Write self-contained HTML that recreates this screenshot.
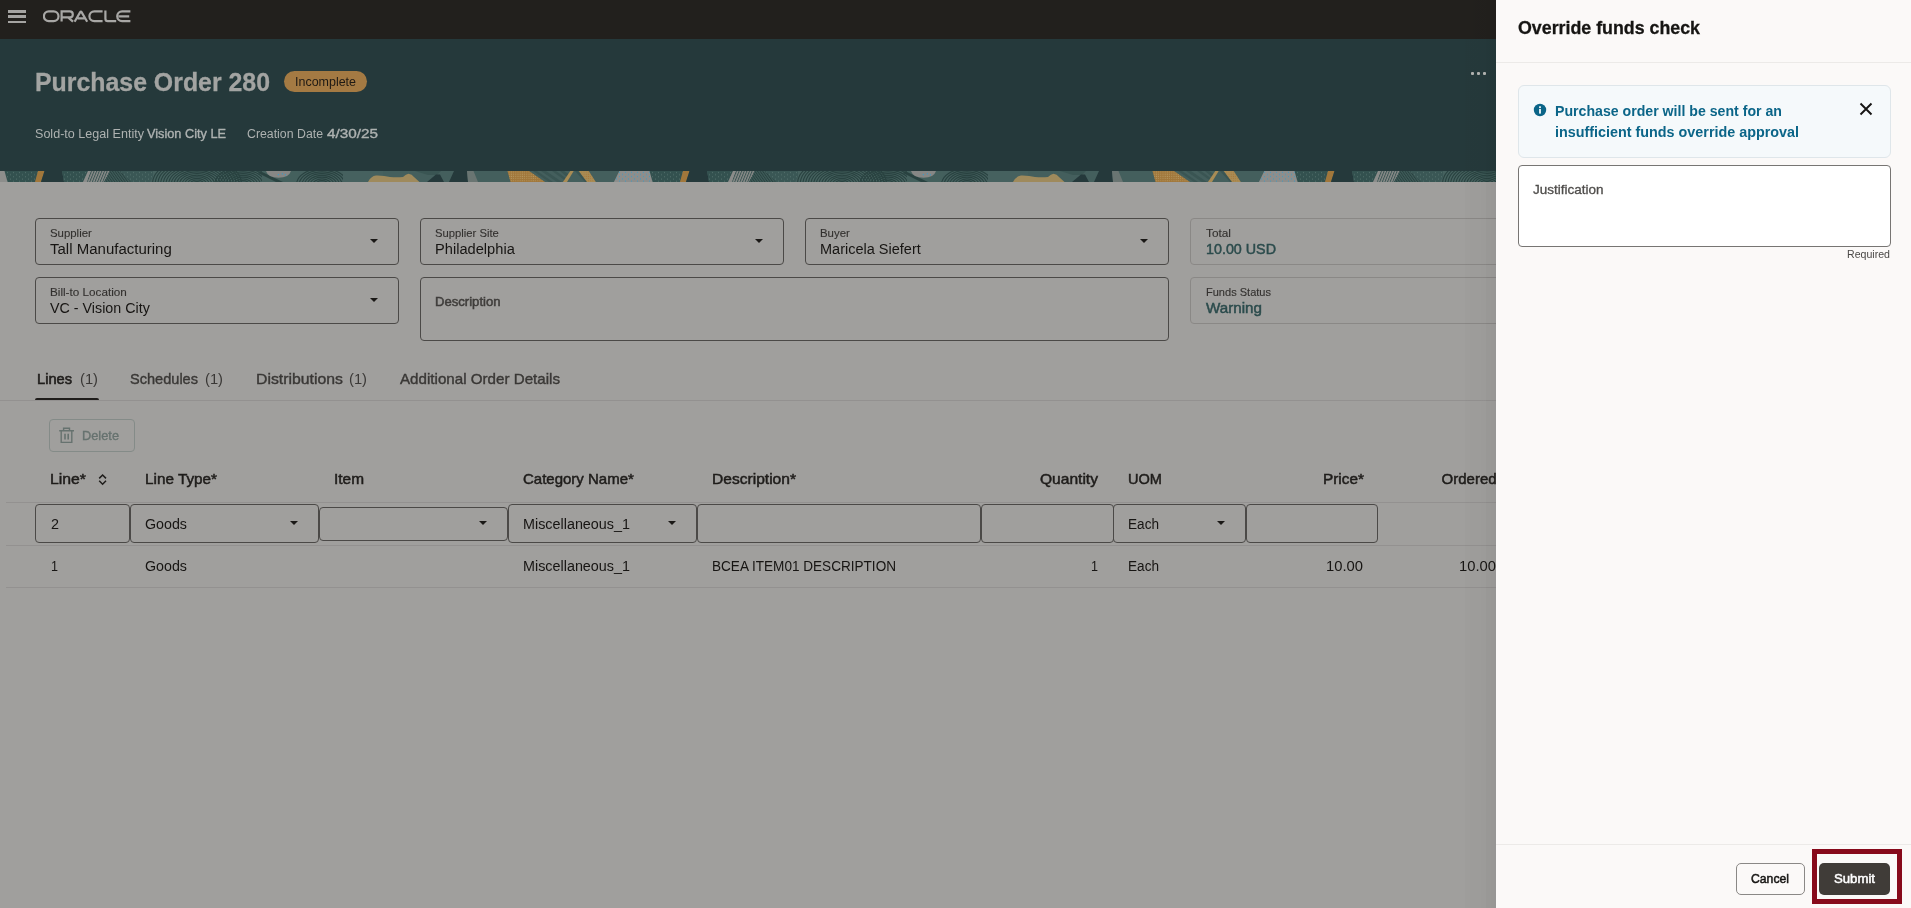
<!DOCTYPE html>
<html>
<head>
<meta charset="utf-8">
<title>Purchase Order 280</title>
<style>
*{box-sizing:border-box;margin:0;padding:0}
html,body{width:1911px;height:908px;overflow:hidden}
body{font-family:"Liberation Sans",sans-serif;background:#a09f9d;color:#1a1816;position:relative}
.abs{position:absolute}
.t{position:absolute;white-space:nowrap;line-height:1;transform-origin:0 50%}
#topbar{left:0;top:0;width:1496px;height:39px;background:#22201d}
#teal{left:0;top:39px;width:1496px;height:132px;background:#25393b}
#strip{left:0;top:171px;width:1496px;height:11px;overflow:hidden;background:#445d5b}
.fld{position:absolute;border:1px solid #4b4947;border-radius:4px;height:47px}
.fld.ro{border-color:#8a8886}
.arr{position:absolute;width:0;height:0;margin-left:1px;margin-top:0.5px;border-left:4.5px solid transparent;border-right:4.5px solid transparent;border-top:4.5px solid #1a1816}
.cell{position:absolute;border:1px solid #4b4947;border-radius:4px;top:504px;height:39px}
.hl{position:absolute;height:1px;background:#939190}
#drawer{left:1496px;top:0;width:415px;height:908px;background:#fbf9f8}
#shadow{left:1465px;top:0;width:31px;height:908px;background:linear-gradient(to right,rgba(0,0,0,0.012) 0,rgba(0,0,0,0.02) 21px,rgba(0,0,0,0.04) 21px,rgba(0,0,0,0.05) 31px)}
</style>
</head>
<body>
<div id="root" style="position:absolute;left:0;top:0;width:1911px;height:908px;will-change:transform">
<div id="topbar" class="abs"></div>
<div id="teal" class="abs"></div>
<div id="strip" class="abs"><!--STRIP_START--><svg width="1496" height="11" viewBox="0 0 1496 11" style="display:block">
<defs>
<pattern id="dt" width="6" height="4.4" patternUnits="userSpaceOnUse"><rect x="1" y="1" width="0.9" height="0.9" fill="#5b7773"/><rect x="4" y="3.2" width="0.9" height="0.9" fill="#5b7773"/></pattern>
<pattern id="db" width="6" height="4.4" patternUnits="userSpaceOnUse"><rect x="1" y="0.8" width="1" height="1" fill="#3f9ac2"/><rect x="4" y="3" width="1" height="1" fill="#3f9ac2"/></pattern>
<pattern id="do" width="2.2" height="2.2" patternUnits="userSpaceOnUse"><rect x="0.5" y="0.5" width="0.9" height="0.9" fill="#b89d66"/></pattern>
<pattern id="do2" width="2.2" height="2.2" patternUnits="userSpaceOnUse"><rect x="0.5" y="0.5" width="1" height="1" fill="#a9783a"/></pattern>
<pattern id="hz" width="2.6" height="11" patternUnits="userSpaceOnUse" patternTransform="skewX(-22)"><rect x="0" y="0" width="1.1" height="11" fill="#3a5553"/></pattern>
<pattern id="hz2" width="2.6" height="11" patternUnits="userSpaceOnUse" patternTransform="skewX(35)"><rect x="0" y="0" width="1.2" height="11" fill="#294240"/></pattern>
<g id="tile">
<rect x="0" y="0" width="646" height="11" fill="#445f5d"/>
<polygon points="4.5,0 38,0 35,11 7.5,11" fill="#33514f"/><polygon points="4.5,0 38,0 35,11 7.5,11" fill="url(#dt)"/>
<polygon points="38,0 44.5,0 41,11 35,11" fill="#a1773b"/>
<polygon points="44.5,0 62,0 64,11 41,11" fill="#25393b"/>
<polygon points="62,0 88,0 83,11 64,11" fill="#33514f"/><polygon points="62,0 88,0 83,11 64,11" fill="url(#dt)"/>
<polygon points="88,0 110,0 104,11 83,11" fill="#8b8c8a"/><polygon points="90,0 110,0 104,11 87,11" fill="url(#hz)"/><polygon points="110,0 122,0 133,11 104,11" fill="#3f5b59"/><polygon points="110,0 122,0 133,11 104,11" fill="url(#hz2)"/>
<polygon points="120,0 156,0 150,11 131,11" fill="#3a5755"/><polygon points="120,0 156,0 150,11 131,11" fill="url(#dt)"/>
<rect x="153" y="0" width="113" height="11" fill="#46625f"/>
<g fill="none" stroke="#294240" stroke-width="1.1"><ellipse cx="197" cy="13" rx="4.0" ry="2.4"/><ellipse cx="197" cy="13" rx="6.7" ry="4.0"/><ellipse cx="197" cy="13" rx="9.4" ry="5.6"/><ellipse cx="197" cy="13" rx="12.1" ry="7.3"/><ellipse cx="197" cy="13" rx="14.8" ry="8.9"/><ellipse cx="197" cy="13" rx="17.5" ry="10.5"/><ellipse cx="197" cy="13" rx="20.2" ry="12.1"/><ellipse cx="197" cy="13" rx="22.9" ry="13.7"/><ellipse cx="197" cy="13" rx="25.6" ry="15.4"/><ellipse cx="197" cy="13" rx="28.3" ry="17.0"/><ellipse cx="197" cy="13" rx="31.0" ry="18.6"/><ellipse cx="197" cy="13" rx="33.7" ry="20.2"/><ellipse cx="197" cy="13" rx="36.4" ry="21.8"/><ellipse cx="197" cy="13" rx="39.1" ry="23.5"/><ellipse cx="197" cy="13" rx="41.8" ry="25.1"/><ellipse cx="197" cy="13" rx="44.5" ry="26.7"/><ellipse cx="243" cy="14" rx="4.0" ry="2.6"/><ellipse cx="243" cy="14" rx="6.7" ry="4.4"/><ellipse cx="243" cy="14" rx="9.4" ry="6.1"/><ellipse cx="243" cy="14" rx="12.1" ry="7.9"/><ellipse cx="243" cy="14" rx="14.8" ry="9.6"/><ellipse cx="243" cy="14" rx="17.5" ry="11.4"/><ellipse cx="243" cy="14" rx="20.2" ry="13.1"/><ellipse cx="243" cy="14" rx="22.9" ry="14.9"/><ellipse cx="243" cy="14" rx="25.6" ry="16.6"/><ellipse cx="243" cy="14" rx="28.3" ry="18.4"/></g>
<rect x="262" y="0" width="36" height="11" fill="#44605d"/>
<path d="M260 0L283 11H276L258 2Z" fill="#294240"/>
<path d="M266 0h25q-2 6.8-12.500 6.800T266 0z" fill="#868785"/>
<rect x="277.800" y="3" width="1.200" height="1.200" fill="#3f9ac2"/><rect x="281.800" y="2.200" width="1.200" height="1.200" fill="#3f9ac2"/><rect x="284.800" y="3.200" width="1.200" height="1.200" fill="#3f9ac2"/>
<g fill="none" stroke="#294240" stroke-width="1.1"><ellipse cx="322" cy="14" rx="4.0" ry="2.6"/><ellipse cx="322" cy="14" rx="6.7" ry="4.4"/><ellipse cx="322" cy="14" rx="9.4" ry="6.1"/><ellipse cx="322" cy="14" rx="12.1" ry="7.9"/><ellipse cx="322" cy="14" rx="14.8" ry="9.6"/><ellipse cx="322" cy="14" rx="17.5" ry="11.4"/><ellipse cx="322" cy="14" rx="20.2" ry="13.1"/><ellipse cx="322" cy="14" rx="22.9" ry="14.9"/><ellipse cx="322" cy="14" rx="25.6" ry="16.6"/></g>
<rect x="343" y="0" width="40" height="11" fill="#46615f"/>
<path d="M368 11Q371 5 376 4.500Q384 4.300 390 6Q397 6.400 403 6Q406 3 408.500 2.700Q412 3 414 6L419.500 11Z" fill="#9f8a5c"/>
<polygon points="415,0 441,0 437,4 428,4" fill="#3a5553"/>
<polygon points="427,11 436,3.500 440,3.500 444,11" fill="#25393b"/>
<polygon points="454,0 467,0 468,11 449,11" fill="#25393b"/>
<polygon points="467,0 473.500,0 478,11 468,11" fill="#6a7572"/>
<polygon points="507.500,0 529,0 545,11 510.500,11" fill="#a1773b"/><polygon points="507.500,0 529,0 545,11 510.500,11" fill="url(#do)"/>
<g fill="#3a5553"><polygon points="533,0 537,0 553,11 549,11"/><polygon points="541,0 546,0 562,11 557,11"/><polygon points="552,0 556,0 567,8 567,11"/><polygon points="560,0 564,0 570,4 568,7"/></g>
<polygon points="562.900,11 567,11 573.700,0 570.300,0" fill="#a98c55"/>
<polygon points="575,0 578,0 588,11 585,11" fill="#3a5553"/>
<polygon points="578.800,0 588.700,0 595.800,11 587,11" fill="#a98c55"/><polygon points="578.800,0 588.700,0 595.800,11 587,11" fill="url(#do2)"/>
<polygon points="619.300,0 649.500,0 652.500,11 613.900,11" fill="#8d8e8c"/><polygon points="619.300,0 649.500,0 652.500,11 613.900,11" fill="url(#db)"/>
</g>
</defs>
<use href="#tile" x="1290"/><use href="#tile" x="645"/><use href="#tile" x="0"/>
<polygon points="0,0 4.500,0 7.500,11 0,11" fill="#8d8e8c"/>
</svg>
<!--STRIP_END--></div>

<!-- hamburger -->
<div class="abs" style="left:8px;top:10px;width:18px;height:2.5px;background:#a5a4a2"></div>
<div class="abs" style="left:8px;top:15.2px;width:18px;height:2.5px;background:#a5a4a2"></div>
<div class="abs" style="left:8px;top:20.5px;width:18px;height:2.5px;background:#a5a4a2"></div>
<!-- oracle logo -->
<svg class="abs" style="left:43px;top:10.2px" width="88" height="13" viewBox="0 0 88 13">
<g fill="none" stroke="#a8a7a5" stroke-width="2.2">
<rect x="0.9" y="1.4" width="14.6" height="9.8" rx="4.9"/>
<path d="M18.6 11.6V1.4h8.2a3 3 0 0 1 0 6h-7.4M25.4 7.6l4.6 4"/>
<path d="M31.6 11.7l5.6-9.6q.7-1.1 1.4 0l5.6 9.6M34.6 8.4h7.6"/>
<path d="M59.6 1.4h-8.3a4.9 4.9 0 0 0 0 9.8h8.3"/>
<path d="M62.4 0.6v8.2q0 2.4 2.4 2.4h8.4"/>
<path d="M87.4 1.4h-8.3a4.9 4.9 0 0 0 0 9.8h8.3M75.6 6.3h10.6"/>
</g>
</svg>

<!-- badge -->
<div class="abs" style="left:284px;top:71px;width:83px;height:21px;border-radius:11px;background:#a47a43"></div>
<!-- dots menu -->
<div class="abs" style="left:1470.9px;top:71.5px;width:3.2px;height:3.6px;border-radius:1px;background:#b2b3b1"></div>
<div class="abs" style="left:1476.9px;top:71.5px;width:3.2px;height:3.6px;border-radius:1px;background:#b2b3b1"></div>
<div class="abs" style="left:1482.9px;top:71.5px;width:3.2px;height:3.6px;border-radius:1px;background:#b2b3b1"></div>

<!-- form fields -->
<div class="fld" style="left:35px;top:218px;width:364px"></div><div class="arr" style="left:369px;top:238.4px"></div>
<div class="fld" style="left:420px;top:218px;width:364px"></div><div class="arr" style="left:754px;top:238.4px"></div>
<div class="fld" style="left:805px;top:218px;width:364px"></div><div class="arr" style="left:1139px;top:238.4px"></div>
<div class="fld ro" style="left:1190px;top:218px;width:364px"></div>
<div class="fld" style="left:35px;top:277px;width:364px"></div><div class="arr" style="left:369px;top:297.4px"></div>
<div class="fld" style="left:420px;top:277px;width:749px;height:64px"></div>
<div class="fld ro" style="left:1190px;top:277px;width:364px"></div>

<!-- tabs -->
<div class="hl" style="left:0;top:400px;width:1496px"></div>
<div class="abs" style="left:35px;top:397.7px;width:64px;height:2.3px;border-radius:2px 2px 0 0;background:#1f1d1b"></div>

<!-- delete button -->
<div class="abs" style="left:49px;top:419px;width:86px;height:33px;border:1px solid #848b88;border-radius:4px"></div>
<svg class="abs" style="left:58px;top:427px" width="17" height="17" viewBox="0 0 17 17" fill="none" stroke="#66726f" stroke-width="1.4">
<path d="M1.2 3.8h14.8M5.6 3.6V1.3h5.9v2.3M3.2 4v11.4h10.6V4"/><path d="M7 6.8v5.6M10.2 6.8v5.6" stroke-width="1.6"/>
</svg>

<!-- sort icon -->
<svg class="abs" style="left:96px;top:471px" width="14" height="16" viewBox="0 0 14 16" fill="none" stroke="#1f1d1b" stroke-width="1.5">
<path d="M3.2 7.4L6.6 4 10 7.4M3.2 9.8L6.6 13.2 10 9.8"/>
</svg>

<!-- table lines -->
<div class="hl" style="left:6px;top:502px;width:1490px"></div>
<div class="hl" style="left:6px;top:545px;width:1490px"></div>
<div class="hl" style="left:6px;top:587px;width:1490px"></div>

<!-- row cells -->
<div class="cell" style="left:35px;width:95px"></div>
<div class="cell" style="left:130px;width:189px"></div><div class="arr" style="left:289px;top:520.3px"></div>
<div class="cell" style="left:319px;width:189px;top:507px;height:34px"></div><div class="arr" style="left:478px;top:520.3px"></div>
<div class="cell" style="left:508px;width:189px"></div><div class="arr" style="left:667px;top:520.3px"></div>
<div class="cell" style="left:697px;width:284px"></div>
<div class="cell" style="left:981px;width:133px"></div>
<div class="cell" style="left:1113px;width:133px"></div><div class="arr" style="left:1216px;top:520.3px"></div>
<div class="cell" style="left:1246px;width:132px"></div>

<div id="shadow" class="abs"></div>
<div id="drawer" class="abs"></div>

<!-- drawer content -->
<div class="abs" style="left:1496px;top:62px;width:415px;height:1px;background:#eceae8"></div>
<div class="abs" style="left:1518px;top:85px;width:373px;height:73px;border:1px solid #dfe6ea;border-radius:6px;background:#f5f9fb"></div>
<svg class="abs" style="left:1533px;top:103px" width="14" height="14" viewBox="0 0 14 14">
<circle cx="7" cy="7" r="6.2" fill="#0b6588"/>
<rect x="6.1" y="6" width="1.8" height="4.6" fill="#f5f9fb"/><rect x="6.1" y="3.3" width="1.8" height="1.8" fill="#f5f9fb"/>
</svg>
<svg class="abs" style="left:1859px;top:102px" width="14" height="14" viewBox="0 0 14 14" fill="none" stroke="#161513" stroke-width="1.9">
<path d="M1.5 1.5l11 11M12.5 1.5l-11 11"/>
</svg>
<div class="abs" style="left:1518px;top:165px;width:373px;height:82px;border:1px solid #777573;border-radius:4px;background:#fff"></div>
<div class="abs" style="left:1496px;top:844px;width:415px;height:1px;background:#eceae8"></div>
<div class="abs" style="left:1736px;top:863px;width:69px;height:32px;border:1px solid #8a8886;border-radius:5px"></div>
<div class="abs" style="left:1819px;top:863px;width:71px;height:32px;border-radius:5px;background:#403c38"></div>
<div class="abs" style="left:1812px;top:849px;width:90px;height:55px;border:5px solid #870a1b"></div>

<div class="t" style="left:35.00px;top:68.57px;font-size:26.5px;color:#a3a4a2;font-weight:bold;-webkit-text-stroke:0.3px;transform:scaleX(0.9384);">Purchase Order 280</div>
<div class="t" style="left:294.70px;top:75.40px;font-size:13px;color:#1f1a14;transform:scaleX(0.9592);">Incomplete</div>
<div class="t" style="left:35.00px;top:128.42px;font-size:12.5px;color:#aeb2b1;transform:scaleX(1.0055);">Sold-to Legal Entity</div>
<div class="t" style="left:147.00px;top:128.42px;font-size:12.5px;color:#aeb2b1;-webkit-text-stroke:0.35px;transform:scaleX(1.0181);">Vision City LE</div>
<div class="t" style="left:247.00px;top:128.42px;font-size:12.5px;color:#aeb2b1;transform:scaleX(0.9854);">Creation Date</div>
<div class="t" style="left:327.00px;top:128.42px;font-size:12.5px;color:#aeb2b1;-webkit-text-stroke:0.35px;transform:scaleX(1.2225);">4/30/25</div>
<div class="t" style="left:50.00px;top:228.27px;font-size:11.5px;color:#33312f;-webkit-text-stroke:0.12px;transform:scaleX(0.9904);">Supplier</div>
<div class="t" style="left:50.00px;top:240.88px;font-size:15.5px;color:#171513;transform:scaleX(0.9682);">Tall Manufacturing</div>
<div class="t" style="left:435.00px;top:228.27px;font-size:11.5px;color:#33312f;-webkit-text-stroke:0.12px;transform:scaleX(0.9782);">Supplier Site</div>
<div class="t" style="left:435.00px;top:240.88px;font-size:15.5px;color:#171513;transform:scaleX(0.9447);">Philadelphia</div>
<div class="t" style="left:820.40px;top:228.27px;font-size:11.5px;color:#33312f;-webkit-text-stroke:0.12px;transform:scaleX(0.9918);">Buyer</div>
<div class="t" style="left:820.40px;top:240.88px;font-size:15.5px;color:#171513;transform:scaleX(0.9360);">Maricela Siefert</div>
<div class="t" style="left:1205.80px;top:228.27px;font-size:11.5px;color:#33312f;-webkit-text-stroke:0.12px;transform:scaleX(1.0289);">Total</div>
<div class="t" style="left:1205.80px;top:240.88px;font-size:15.5px;color:#2b4b4c;-webkit-text-stroke:0.5px;transform:scaleX(0.9231);">10.00 USD</div>
<div class="t" style="left:50.00px;top:287.27px;font-size:11.5px;color:#33312f;-webkit-text-stroke:0.12px;transform:scaleX(1.0181);">Bill-to Location</div>
<div class="t" style="left:50.00px;top:299.88px;font-size:15.5px;color:#171513;transform:scaleX(0.9219);">VC - Vision City</div>
<div class="t" style="left:1205.80px;top:287.27px;font-size:11.5px;color:#33312f;-webkit-text-stroke:0.12px;transform:scaleX(0.9592);">Funds Status</div>
<div class="t" style="left:1205.80px;top:299.88px;font-size:15.5px;color:#2b4b4c;-webkit-text-stroke:0.5px;transform:scaleX(0.9798);">Warning</div>
<div class="t" style="left:435.00px;top:296.42px;font-size:12.5px;color:#3f3d3b;-webkit-text-stroke:0.5px;transform:scaleX(1.0475);">Description</div>
<div class="t" style="left:37.00px;top:371.30px;font-size:15px;color:#1f1d1b;-webkit-text-stroke:0.6px;transform:scaleX(0.9760);">Lines</div>
<div class="t" style="left:80.00px;top:371.30px;font-size:15px;color:#3a3836;transform:scaleX(0.9813);">(1)</div>
<div class="t" style="left:130.00px;top:371.30px;font-size:15px;color:#3a3836;-webkit-text-stroke:0.4px;transform:scaleX(0.9706);">Schedules</div>
<div class="t" style="left:205.00px;top:371.30px;font-size:15px;color:#3a3836;transform:scaleX(0.9813);">(1)</div>
<div class="t" style="left:256.00px;top:371.30px;font-size:15px;color:#3a3836;-webkit-text-stroke:0.4px;transform:scaleX(1.0541);">Distributions</div>
<div class="t" style="left:349.00px;top:371.30px;font-size:15px;color:#3a3836;transform:scaleX(0.9813);">(1)</div>
<div class="t" style="left:400.00px;top:371.30px;font-size:15px;color:#3a3836;-webkit-text-stroke:0.4px;transform:scaleX(1.0100);">Additional Order Details</div>
<div class="t" style="left:82.00px;top:430.42px;font-size:12.5px;color:#66726f;-webkit-text-stroke:0.35px;transform:scaleX(1.0238);">Delete</div>
<div class="t" style="left:50.00px;top:471.00px;font-size:15px;color:#1f1d1b;-webkit-text-stroke:0.5px;transform:scaleX(1.0525);">Line*</div>
<div class="t" style="left:145.00px;top:471.00px;font-size:15px;color:#1f1d1b;-webkit-text-stroke:0.5px;transform:scaleX(1.0195);">Line Type*</div>
<div class="t" style="left:334.00px;top:471.00px;font-size:15px;color:#1f1d1b;-webkit-text-stroke:0.5px;transform:scaleX(1.0278);">Item</div>
<div class="t" style="left:523.00px;top:471.00px;font-size:15px;color:#1f1d1b;-webkit-text-stroke:0.5px;">Category Name*</div>
<div class="t" style="left:712.00px;top:471.00px;font-size:15px;color:#1f1d1b;-webkit-text-stroke:0.5px;transform:scaleX(1.0386);">Description*</div>
<div class="t" style="left:1040.00px;top:471.00px;font-size:15px;color:#1f1d1b;-webkit-text-stroke:0.5px;transform:scaleX(1.0380);">Quantity</div>
<div class="t" style="left:1128.00px;top:471.00px;font-size:15px;color:#1f1d1b;-webkit-text-stroke:0.5px;transform:scaleX(0.9714);">UOM</div>
<div class="t" style="left:1322.60px;top:471.00px;font-size:15px;color:#1f1d1b;-webkit-text-stroke:0.5px;transform:scaleX(1.0246);">Price*</div>
<div class="t" style="left:1441.60px;top:471.00px;font-size:15px;color:#1f1d1b;-webkit-text-stroke:0.5px;">Ordered</div>
<div class="t" style="left:51.00px;top:515.88px;font-size:15.5px;color:#171513;transform:scaleX(0.9275);">2</div>
<div class="t" style="left:145.00px;top:515.88px;font-size:15.5px;color:#171513;transform:scaleX(0.9196);">Goods</div>
<div class="t" style="left:523.00px;top:515.88px;font-size:15.5px;color:#171513;transform:scaleX(0.9267);">Miscellaneous_1</div>
<div class="t" style="left:1128.00px;top:515.88px;font-size:15.5px;color:#171513;transform:scaleX(0.8771);">Each</div>
<div class="t" style="left:51.00px;top:557.88px;font-size:15.5px;color:#171513;transform:scaleX(0.8116);">1</div>
<div class="t" style="left:145.00px;top:557.88px;font-size:15.5px;color:#171513;transform:scaleX(0.9196);">Goods</div>
<div class="t" style="left:523.00px;top:557.88px;font-size:15.5px;color:#171513;transform:scaleX(0.9267);">Miscellaneous_1</div>
<div class="t" style="left:712.00px;top:557.88px;font-size:15.5px;color:#171513;transform:scaleX(0.8755);">BCEA ITEM01 DESCRIPTION</div>
<div class="t" style="left:1091.00px;top:557.88px;font-size:15.5px;color:#171513;transform:scaleX(0.8116);">1</div>
<div class="t" style="left:1128.00px;top:557.88px;font-size:15.5px;color:#171513;transform:scaleX(0.8771);">Each</div>
<div class="t" style="left:1326.00px;top:557.88px;font-size:15.5px;color:#171513;transform:scaleX(0.9537);">10.00</div>
<div class="t" style="left:1459.00px;top:557.88px;font-size:15.5px;color:#171513;transform:scaleX(0.9537);">10.00</div>
<div class="t" style="left:1518.00px;top:18.94px;font-size:18.5px;color:#161513;font-weight:bold;-webkit-text-stroke:0.3px;transform:scaleX(0.9620);">Override funds check</div>
<div class="t" style="left:1555.00px;top:103.30px;font-size:15px;color:#0b6588;font-weight:bold;transform:scaleX(0.9423);">Purchase order will be sent for an</div>
<div class="t" style="left:1555.00px;top:124.30px;font-size:15px;color:#0b6588;font-weight:bold;transform:scaleX(0.9567);">insufficient funds override approval</div>
<div class="t" style="left:1533.00px;top:184.42px;font-size:12.5px;color:#4f4d4b;-webkit-text-stroke:0.3px;transform:scaleX(1.0794);">Justification</div>
<div class="t" style="left:1847.00px;top:249.27px;font-size:11.5px;color:#4a4846;transform:scaleX(0.9213);">Required</div>
<div class="t" style="left:1751.00px;top:873.42px;font-size:12.5px;color:#161513;-webkit-text-stroke:0.5px;transform:scaleX(0.9763);">Cancel</div>
<div class="t" style="left:1834.00px;top:873.42px;font-size:12.5px;color:#ffffff;-webkit-text-stroke:0.5px;transform:scaleX(1.0538);">Submit</div>
</div>
</body>
</html>
